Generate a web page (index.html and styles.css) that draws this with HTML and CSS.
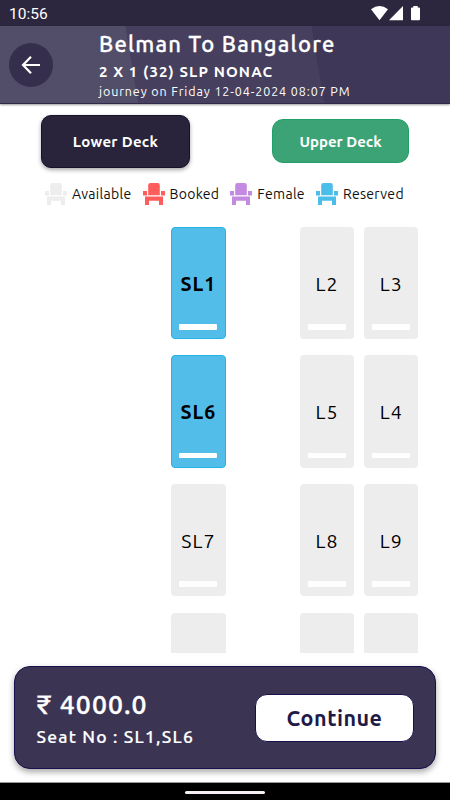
FILE: index.html
```
<!DOCTYPE html>
<html lang="en">

<head>
    <meta charset="UTF-8">
    <meta name="viewport" content="width=device-width, initial-scale=1.0">
    <title>Belman To Bangalore</title>
    <link rel="stylesheet" href="styles.css">
</head>

<body>
    <!-- Seat icon shared by the legend -->
    <svg class="sprite" aria-hidden="true">
        <symbol id="seat" viewBox="0 0 22 22">
            <path d="M7.5 0h7a2.3 2.3 0 0 1 2.3 2.3V12.2H5.2V2.3A2.3 2.3 0 0 1 7.5 0z" />
            <path d="M0 8h4v4.4H0zM18 8h4v4.4h-4z" />
            <path d="M2 13.4h18V22h-4v-4.2H6V22H2z" />
        </symbol>
    </svg>

    <div class="status-bar">
        <span>10:56</span>
        <div class="status-icons">
            <svg class="wifi" viewBox="0 0 17 15">
                <path d="M0 3.2Q8.5-3.2 17 3.2L8.5 14.3z" />
            </svg>
            <svg class="signal" viewBox="0 0 14 15">
                <path d="M14 0v14.3H0z" />
            </svg>
            <svg class="battery" viewBox="0 0 9 15">
                <path d="M2.3 0h4.4v1.4H8a1 1 0 0 1 1 1v10.9a1 1 0 0 1-1 1H1a1 1 0 0 1-1-1V2.4a1 1 0 0 1 1-1h1.3z" />
            </svg>
        </div>
    </div>

    <header class="header">
        <button class="back-btn" aria-label="Back">
            <svg viewBox="0 0 20 20">
                <path d="M19 10H2.5M10 1.8L2 10l8 8.2" />
            </svg>
        </button>
        <div class="trip">
            <h1>Belman To Bangalore</h1>
            <p class="bus-type">2 X 1 (32) SLP NONAC</p>
            <p class="journey">journey on Friday 12-04-2024 08:07 PM</p>
        </div>
    </header>

    <main class="content">
        <div class="decks">
            <button class="deck lower">Lower Deck</button>
            <button class="deck upper">Upper Deck</button>
        </div>

        <div class="legend">
            <div class="legend-item available"><svg><use href="#seat" /></svg><span>Available</span></div>
            <div class="legend-item booked"><svg><use href="#seat" /></svg><span>Booked</span></div>
            <div class="legend-item female"><svg><use href="#seat" /></svg><span>Female</span></div>
            <div class="legend-item reserved"><svg><use href="#seat" /></svg><span>Reserved</span></div>
        </div>

        <!-- Sleeper berths, single on the left and double on the right -->
        <div class="seats">
            <div class="seat single selected"><span>SL1</span></div>
            <div class="seat double"><span>L2</span></div>
            <div class="seat"><span>L3</span></div>
            <div class="seat single selected"><span>SL6</span></div>
            <div class="seat double"><span>L5</span></div>
            <div class="seat"><span>L4</span></div>
            <div class="seat single"><span>SL7</span></div>
            <div class="seat double"><span>L8</span></div>
            <div class="seat"><span>L9</span></div>
            <div class="seat single"></div>
            <div class="seat double"></div>
            <div class="seat"></div>
        </div>
    </main>

    <div class="summary">
        <div class="fare">
            <div class="price">₹ 4000.0</div>
            <div class="seat-no">Seat No : SL1,SL6</div>
        </div>
        <button class="continue-btn"><span>Continue</span></button>
    </div>

    <div class="nav-bar">
        <div class="nav-handle"></div>
    </div>
</body>

</html>
```
FILE: styles.css
```
* {
    box-sizing: border-box;
}

html,
body {
    height: 100%;
    margin: 0;
}

body {
    display: flex;
    flex-direction: column;
    overflow: hidden;
    background: #fff;
    color: #000;
    font-family: Ubuntu, "Noto Sans", sans-serif;
    white-space: nowrap;
}

h1,
p {
    margin: 0;
}

button {
    border: none;
    padding: 0;
    font-family: inherit;
    cursor: pointer;
}

.sprite {
    display: none;
}

/* Status bar */
.status-bar {
    display: flex;
    flex: none;
    justify-content: space-between;
    height: 26px;
    padding: 4px 30px 0 9px;
    background: #2c273e;
    color: #fff;
    font: 15.5px/20px Roboto, sans-serif;
}

.status-icons {
    display: flex;
    padding-top: 2px;
}

.status-icons svg {
    height: 15px;
    fill: #fff;
}

.wifi {
    width: 17px;
}

.signal {
    width: 14px;
    margin-left: 1px;
}

.battery {
    width: 9px;
    margin-left: 8px;
}

/* Header */
.header {
    display: flex;
    flex: none;
    align-items: center;
    height: 78px;
    padding-left: 9px;
    background:
        linear-gradient(80.5deg, #524d68 136px, #463f5e 136.5px, #463f5e 319.5px, #3e3757 320px);
    border-bottom: 1px solid #302a49;
    box-shadow: 0 1px 2px rgba(0, 0, 0, 0.4);
    color: #fff;
}

.back-btn {
    display: flex;
    align-items: center;
    justify-content: center;
    width: 44px;
    height: 44px;
    border-radius: 50%;
    background: #352e4d;
}

.back-btn svg {
    width: 20px;
    height: 20px;
    fill: none;
    stroke: #fff;
    stroke-width: 2.2;
}

.trip {
    margin: 0 0 3px 46px;
}

.trip h1 {
    font-size: 22px;
    font-weight: 500;
    line-height: 27px;
    letter-spacing: 1.2px;
    -webkit-text-stroke: 0.3px #fff;
}

.bus-type {
    font-size: 15px;
    font-weight: 600;
    line-height: 29px;
    letter-spacing: 1.1px;
}

.journey {
    font-size: 12.5px;
    line-height: 10px;
    letter-spacing: 0.9px;
}

/* Deck switch */
.content {
    display: flex;
    flex-direction: column;
    flex: none;
    height: 548.5px;
    overflow: hidden;
}

.decks {
    display: flex;
    flex: none;
    justify-content: space-between;
    align-items: center;
    height: 53px;
    margin: 10.5px 41px 0;
}

.deck {
    color: #fff;
    font-size: 15px;
    font-weight: 700;
}

.lower {
    width: 149px;
    height: 53px;
    border: 1px solid #151129;
    border-radius: 10px;
    background: #29243b;
    box-shadow: 0 2px 4px rgba(0, 0, 0, 0.35);
    letter-spacing: 0.3px;
}

.upper {
    width: 137px;
    height: 44px;
    border: 1px solid #1fa067;
    border-radius: 11px;
    background: #3ba375;
    font-weight: 600;
}

/* Legend */
.legend {
    display: flex;
    flex: none;
    gap: 11px;
    height: 22px;
    margin: 15.5px 0 0 45px;
}

.legend-item {
    display: flex;
    align-items: center;
    gap: 5px;
    font-size: 14px;
    letter-spacing: 0.3px;
}

.legend-item svg {
    width: 22px;
    height: 22px;
    fill: currentColor;
}

.legend-item span {
    color: #111;
}

.available {
    color: #ededed;
}

.booked {
    color: #ff5c5c;
}

.female {
    color: #c48ae2;
}

.reserved {
    color: #4bbde9;
}

/* Seats */
.seats {
    display: grid;
    grid-template-columns: repeat(6, 54.5px);
    grid-auto-rows: 112.3px;
    gap: 16.3px 9.8px;
    margin: 21.8px 0 0 42.5px;
}

.seat {
    display: flex;
    flex-direction: column;
    align-items: center;
    border-radius: 4px;
    background: #ededed;
    font-size: 19.5px;
    letter-spacing: 1px;
}

.seat span {
    margin-top: 43px;
    line-height: 28px;
}

.seat::after {
    content: "";
    width: 38px;
    height: 5.5px;
    margin: auto 0 9.5px;
    border-radius: 1px;
    background: #fff;
}

.single {
    grid-column: 3;
}

.double {
    grid-column: 5;
}

.selected {
    border: 1px solid #25b3e5;
    background: #52bde8;
    font-weight: 700;
}

.selected span {
    margin-top: 42px;
}

.selected::after {
    margin-bottom: 8.5px;
}

/* Fare summary */
.summary {
    display: flex;
    flex: none;
    justify-content: space-between;
    align-items: center;
    height: 103px;
    margin: 13.5px 14px 0 13.5px;
    padding: 0 21px 0 22px;
    border: 1px solid #17104a;
    border-radius: 16px;
    background: #3b3453;
    box-shadow: 0 3px 6px rgba(0, 0, 0, 0.35);
    color: #fff;
}

.fare {
    padding-top: 2px;
}

.price {
    font-size: 26.5px;
    font-weight: 500;
    line-height: 36px;
    letter-spacing: 1.1px;
    -webkit-text-stroke: 0.4px #fff;
}

.seat-no {
    font-size: 17.5px;
    font-weight: 500;
    line-height: 30px;
    letter-spacing: 1.2px;
    -webkit-text-stroke: 0.2px #fff;
}

.continue-btn {
    width: 159px;
    height: 48px;
    border: 1px solid #17104a;
    border-radius: 12px;
    background: #fff;
    color: #211947;
    font-size: 21.5px;
    font-weight: 600;
    letter-spacing: 0.5px;
}

/* System navigation */
.nav-bar {
    display: flex;
    flex: none;
    justify-content: center;
    height: 18px;
    margin-top: auto;
    padding-top: 7.5px;
    border-top: 1px solid #999;
    background: #000;
}

.nav-handle {
    width: 80px;
    height: 3px;
    border-radius: 2px;
    background: #f5eff5;
}
```
